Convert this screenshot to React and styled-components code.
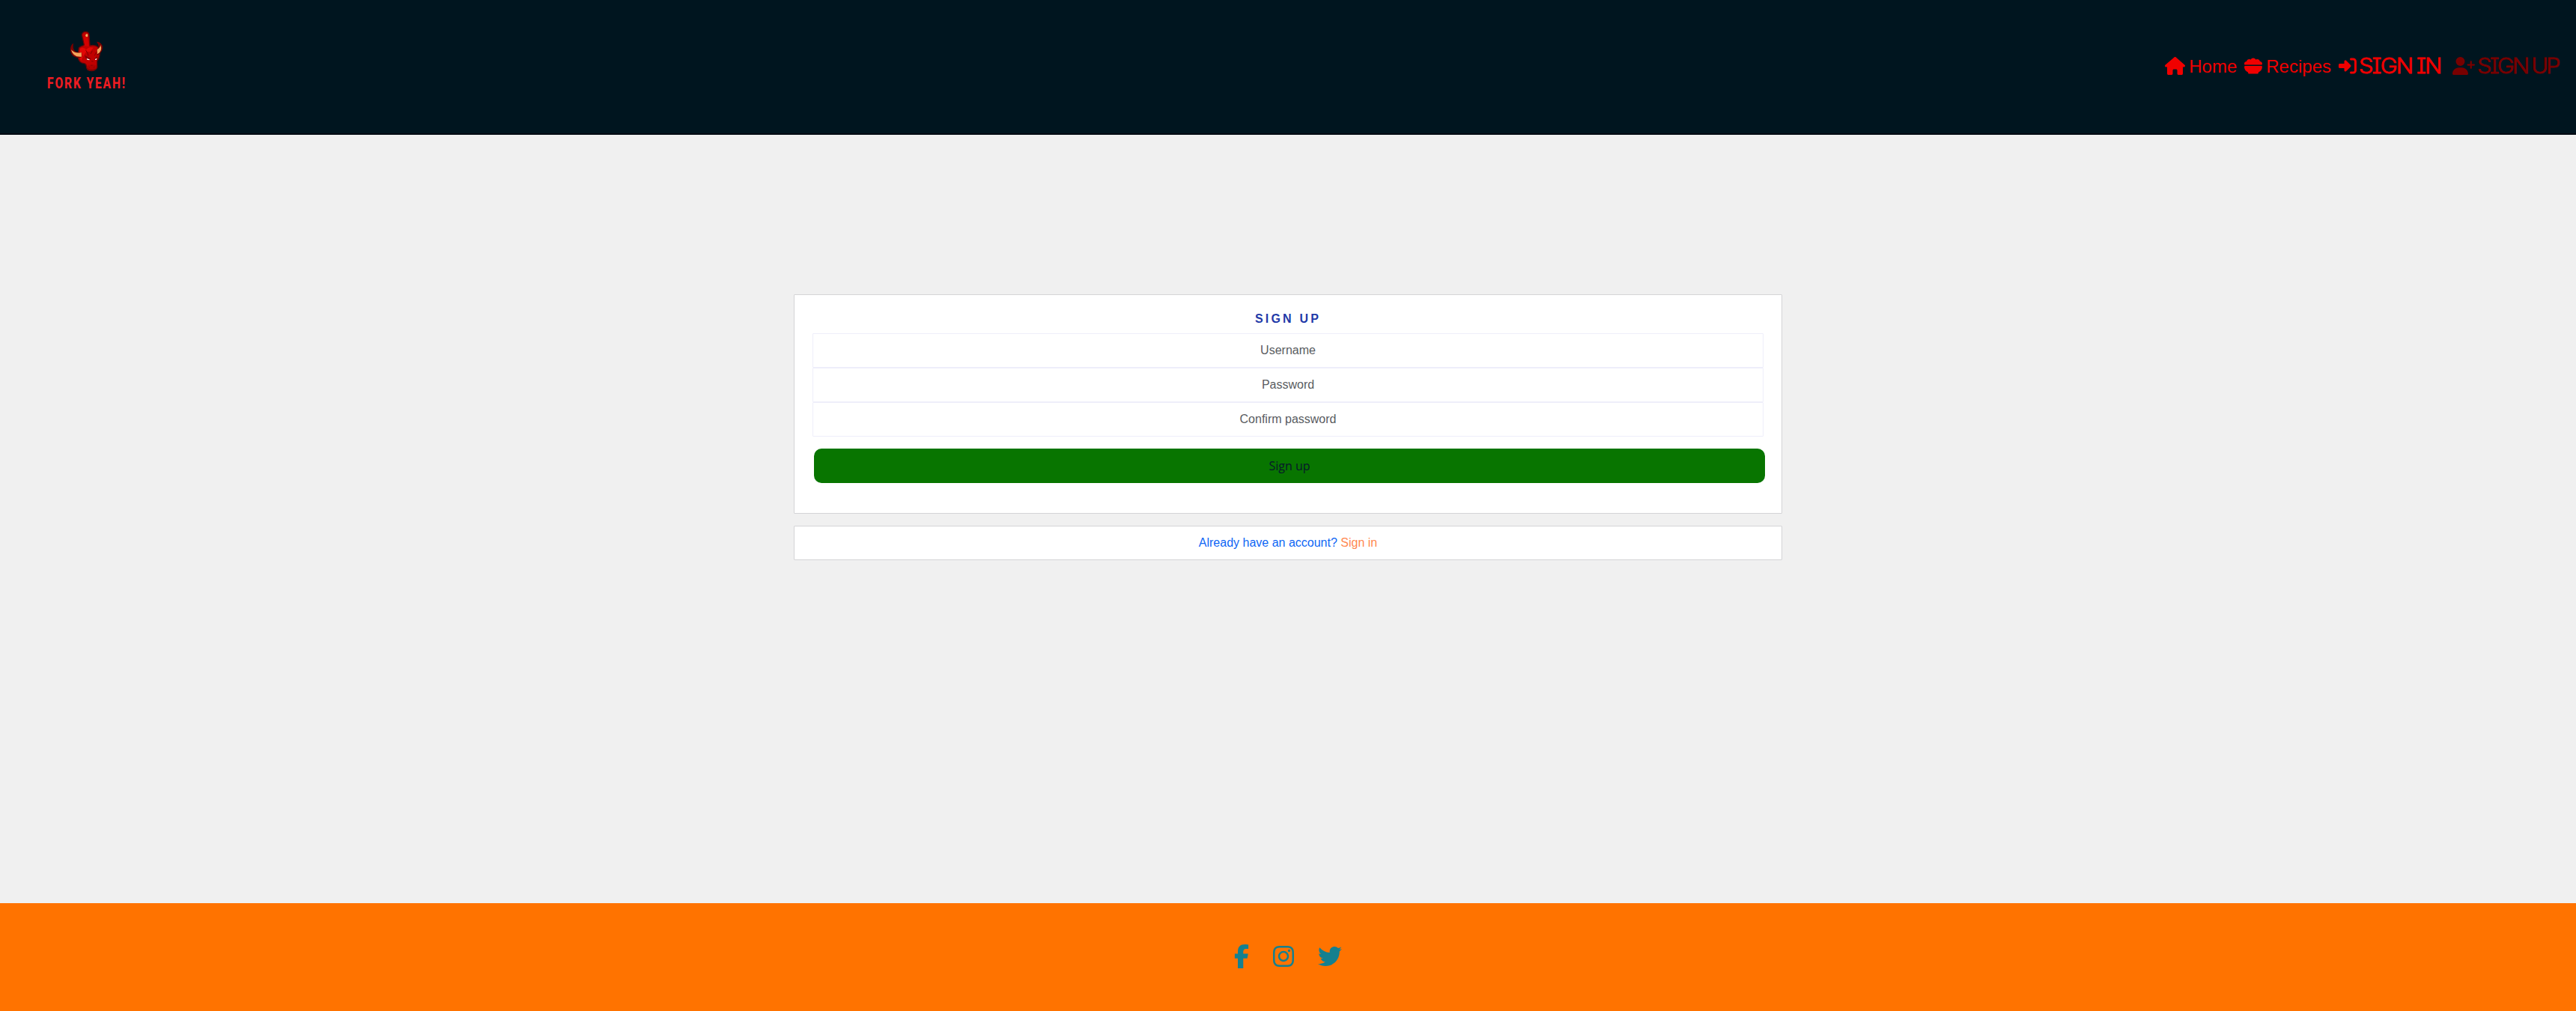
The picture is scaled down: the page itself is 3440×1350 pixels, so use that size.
import React from "react";
import styled, { createGlobalStyle } from "styled-components";
import {
  FaHouse,
  FaBowlFood,
  FaRightToBracket,
  FaUserPlus,
  FaInstagram,
  FaTwitter,
} from "react-icons/fa6";

const GlobalStyle = createGlobalStyle`
  *, *::before, *::after { box-sizing: border-box; }
  body {
    margin: 0;
    background: #f0f0f0;
    font-family: "Liberation Sans", Arial, sans-serif;
    font-size: 16px;
    line-height: 24px;
  }
`;

const Page = styled.div`
  display: flex;
  flex-direction: column;
  height: 1350px;
`;

const Header = styled.header`
  display: flex;
  justify-content: space-between;
  height: 180px;
  padding: 20px 22px 0 40px;
  background: #00151f;
  border-bottom: 2px solid #000a12;
`;

const Brand = styled.a`
  display: flex;
  flex-direction: column;
  width: 160px;
  height: 120px;
`;

const BullMark = styled.svg`
  width: 160px;
  height: 80px;
  flex: none;
`;

const BrandName = styled.span`
  margin-left: 23px;
  font-family: Roboto, sans-serif;
  font-size: 19.5px;
  font-weight: 800;
  line-height: 23px;
  letter-spacing: 2.3px;
  color: #ee1c22;
  white-space: nowrap;
  transform: scaleX(0.8);
  transform-origin: left;
`;

const Nav = styled.nav`
  display: flex;
  height: 136px;
  align-items: center;
  font-size: 24px;
  line-height: 36px;
`;

const NavLink = styled.a`
  display: flex;
  align-items: center;
  gap: ${(p) => p.$gap || 5}px;
  margin-left: ${(p) => p.$offset || 0}px;
  color: ${(p) => (p.$active ? "#780000" : "#f00000")};
  white-space: nowrap;

  svg {
    flex: none;
    width: ${(p) => p.$icon || 24}px;
    height: 24px;
  }
`;

const NavText = styled.span`
  padding-top: 1px;
`;

const DisplayLabel = styled.span`
  width: ${(p) => p.$width}px;
  font-family: Inter, sans-serif;
  font-size: 28.5px;
  font-weight: 300;
  letter-spacing: ${(p) => p.$spacing}px;
  word-spacing: -1px;
  font-feature-settings: "cv08" 1;
  -webkit-text-stroke: 0.9px currentColor;
  transform: scaleX(1.08);
  transform-origin: left;
`;

const Main = styled.main`
  flex: 1;
  display: flex;
  flex-direction: column;
  align-items: center;
  gap: 16px;
  padding-top: 213px;
`;

const Panel = styled.section`
  width: 1320px;
  background: #fff;
  border: 1px solid #d4d4d6;
  border-radius: 1px;
  text-align: center;
`;

const FormPanel = styled(Panel)`
  height: 293px;
  padding: 20px 24px;
`;

const Title = styled.h1`
  margin: 0 0 7px;
  font-size: 16px;
  font-weight: 700;
  line-height: 24px;
  letter-spacing: 3.2px;
  color: #1f3aa8;
`;

const Form = styled.form`
  display: flex;
  flex-direction: column;
`;

const Field = styled.input`
  display: block;
  width: 1270px;
  height: 46px;
  padding: 0 12px;
  border: 1px solid #eeeefa;
  border-radius: 1px;
  background: #fff;
  font: 16px "Liberation Sans", Arial, sans-serif;
  text-align: center;

  &::placeholder { color: #595c5f; opacity: 1; }
`;

const SubmitButton = styled.button`
  width: 1270px;
  height: 46px;
  margin: 16px 0 0 2px;
  padding: 0 0 1px;
  border: 0;
  border-radius: 10px;
  background: #087500;
  color: #07182a;
  font: 16px "Open Sans", sans-serif;
`;

const AccountPanel = styled(Panel)`
  height: 46px;
  line-height: 44px;
  color: #0d66f5;
`;

const AccountLink = styled.a`
  color: #ff8850;
`;

const Footer = styled.footer`
  display: flex;
  justify-content: center;
  gap: 32px;
  height: 144px;
  padding-top: 55px;
  background: #ff7300;
  color: #15808f;
`;

const SocialLink = styled.a`
  display: flex;
  width: ${(p) => p.$width}px;
  height: 32px;

  svg { width: 100%; height: 32px; }
`;

function FacebookMark() {
  return (
    <svg viewBox="0 0 320 512" fill="currentColor" aria-hidden="true">
      <path d="M80 299.3V512H196V299.3h86.5l18-97.8H196V166.9c0-51.7 20.3-71.5 72.7-71.5c16.3 0 29.4 .4 37 1.2V7.9C291.4 4 256.4 0 236.2 0C129.3 0 80 50.5 80 159.4v42.1H14v97.8H80z" />
    </svg>
  );
}

function Bull() {
  return (
    <BullMark viewBox="0 0 480 240" aria-hidden="true">
      <g stroke="#680606" strokeWidth="4" strokeLinejoin="round">
        <path fill="#c00000" d="M196 132C205 122 213 126 217 119L208 80Q210 67 224 67Q237 68 237 82L240 123Q260 118 273 129L280 154Q278 174 269 184L269 210Q263 224 246 224Q226 224 226 205Q226 197 218 194Q196 193 192 168Z" />
      </g>
      <path fill="#e20705" d="M201 135Q214 126 226 139Q235 126 254 131L240 148L227 146Q213 160 205 182Q194 163 201 135Z" />
      <path fill="#d50000" d="M215 90Q228 79 232 100L235 126L220 124Z" />
      <path fill="#f0b060" d="M222 80L228 75L232 79L231 88L224 87Z" />
      <path fill="#780000" d="M174 113C157 123 157 157 178 167C190 173 204 171 209 167L207 150C184 151 169 145 174 113ZM267 107Q285 106 291 127Q293 149 269 163L268 138Q283 130 267 107Z" />
      <path fill="#f5a45b" d="M165 139Q180 156 206 150L207 167Q172 171 165 139ZM283 120Q292 145 270 157L269 138Q281 132 283 120Z" />
      <path fill="#8b0000" d="M219 161L233 168L244 174L241 181L224 176ZM270 165L259 173L261 181L271 175ZM227 206Q246 194 269 205L267 216Q245 230 228 214Z" />
      <path fill="#b00000" d="M229 204Q237 196 247 204Q260 197 267 204L265 214Q246 223 230 212Z" />
      <path fill="#fff" d="M227 174L239 178L238 181L229 179ZM261 177L268 173L267 179L261 180Z" />
      <path fill="none" stroke="#850000" strokeWidth="3" d="M223 140Q233 153 234 164M250 143L243 156M265 149L259 163M235 208L240 211M259 208L255 211M246 185L254 186" />
    </BullMark>
  );
}

export default function App() {
  return (
    <>
      <GlobalStyle />
      <Page>
        <Header>
          <Brand>
            <Bull />
            <BrandName>FORK YEAH!</BrandName>
          </Brand>
          <Nav>
            <NavLink $icon={27}><FaHouse /><NavText>Home</NavText></NavLink>
            <NavLink $offset={10}><FaBowlFood /><NavText>Recipes</NavText></NavLink>
            <NavLink $offset={10} $gap={3}>
              <FaRightToBracket />
              <DisplayLabel $width={111} $spacing={-1.7}>SIGN IN</DisplayLabel>
            </NavLink>
            <NavLink $offset={14} $gap={3} $icon={30} $active>
              <FaUserPlus />
              <DisplayLabel $width={110} $spacing={-2.6}>SIGN UP</DisplayLabel>
            </NavLink>
          </Nav>
        </Header>
        <Main>
          <FormPanel>
            <Title>SIGN UP</Title>
            <Form>
              <Field type="text" placeholder="Username" />
              <Field type="password" placeholder="Password" />
              <Field type="password" placeholder="Confirm password" />
              <SubmitButton type="button">Sign up</SubmitButton>
            </Form>
          </FormPanel>
          <AccountPanel>
            Already have an account? <AccountLink>Sign in</AccountLink>
          </AccountPanel>
        </Main>
        <Footer>
          <SocialLink $width={20}><FacebookMark /></SocialLink>
          <SocialLink $width={28}><FaInstagram /></SocialLink>
          <SocialLink $width={32}><FaTwitter /></SocialLink>
        </Footer>
      </Page>
    </>
  );
}
